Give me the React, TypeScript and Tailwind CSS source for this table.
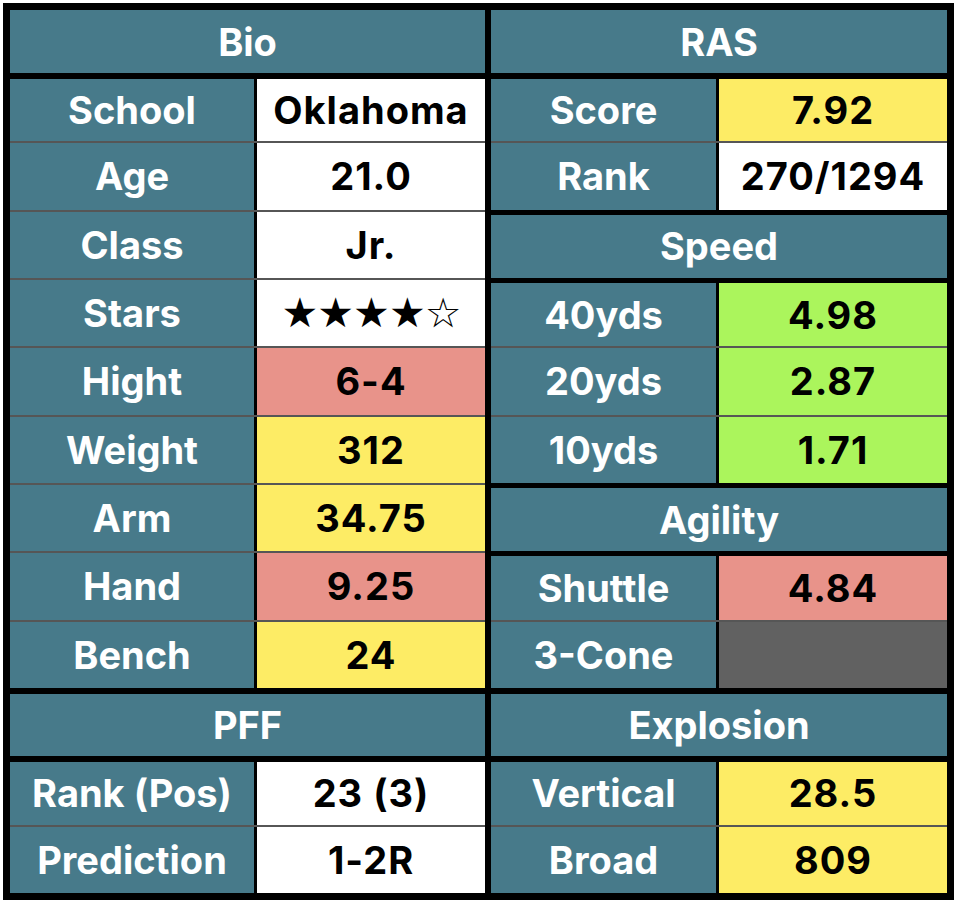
import React from "react";

type Line = "none" | "thin" | "thick" | "heavy";
type Item =
  | { kind: "head"; text: string; line: Line }
  | { kind: "row"; label: string; value: string; bg: string; line: Line };

const lineClass: Record<Line, string> = {
  none: "",
  thin: "border-t-2 border-[#565656]",
  thick: "border-t-[5px] border-black",
  heavy: "border-t-[6px] border-black",
};

const left: Item[] = [
  { kind: "head", text: "Bio", line: "none" },
  { kind: "row", label: "School", value: "Oklahoma", bg: "bg-white", line: "heavy" },
  { kind: "row", label: "Age", value: "21.0", bg: "bg-white", line: "thin" },
  { kind: "row", label: "Class", value: "Jr.", bg: "bg-white", line: "thin" },
  { kind: "row", label: "Stars", value: "★★★★☆", bg: "bg-white", line: "thin" },
  { kind: "row", label: "Hight", value: "6-4", bg: "bg-[#e8938a]", line: "thin" },
  { kind: "row", label: "Weight", value: "312", bg: "bg-[#fdec65]", line: "thin" },
  { kind: "row", label: "Arm", value: "34.75", bg: "bg-[#fdec65]", line: "thin" },
  { kind: "row", label: "Hand", value: "9.25", bg: "bg-[#e8938a]", line: "thin" },
  { kind: "row", label: "Bench", value: "24", bg: "bg-[#fdec65]", line: "thin" },
  { kind: "head", text: "PFF", line: "heavy" },
  { kind: "row", label: "Rank (Pos)", value: "23 (3)", bg: "bg-white", line: "heavy" },
  { kind: "row", label: "Prediction", value: "1-2R", bg: "bg-white", line: "thin" },
];

const right: Item[] = [
  { kind: "head", text: "RAS", line: "none" },
  { kind: "row", label: "Score", value: "7.92", bg: "bg-[#fdec65]", line: "heavy" },
  { kind: "row", label: "Rank", value: "270/1294", bg: "bg-white", line: "thin" },
  { kind: "head", text: "Speed", line: "thick" },
  { kind: "row", label: "40yds", value: "4.98", bg: "bg-[#abf55c]", line: "thick" },
  { kind: "row", label: "20yds", value: "2.87", bg: "bg-[#abf55c]", line: "thin" },
  { kind: "row", label: "10yds", value: "1.71", bg: "bg-[#abf55c]", line: "thin" },
  { kind: "head", text: "Agility", line: "thick" },
  { kind: "row", label: "Shuttle", value: "4.84", bg: "bg-[#e8938a]", line: "thick" },
  { kind: "row", label: "3-Cone", value: "", bg: "bg-[#616161]", line: "thin" },
  { kind: "head", text: "Explosion", line: "heavy" },
  { kind: "row", label: "Vertical", value: "28.5", bg: "bg-[#fdec65]", line: "heavy" },
  { kind: "row", label: "Broad", value: "809", bg: "bg-[#fdec65]", line: "thin" },
];

const Half = ({ items, labelWidth }: { items: Item[]; labelWidth: string }) => {
  return (
    <div className="flex flex-col">
      {items.map((it, i) => {
        const height = i === 0 ? "h-[63px]" : "h-[68.33px]";
        if (it.kind === "head") {
          return (
            <div
              key={i}
              className={`${height} ${lineClass[it.line]} flex items-center justify-center bg-[#477a8a] text-white`}
            >
              {it.text}
            </div>
          );
        }
        return (
          <div key={i} className={`${height} ${lineClass[it.line]} flex`}>
            <div
              className={`${labelWidth} flex items-center justify-center border-r-[3px] border-black bg-[#477a8a] text-white`}
            >
              {it.label}
            </div>
            <div
              className={`w-[228px] flex items-center justify-center ${it.bg} text-black tracking-[1px]`}
            >
              {it.label === "Stars" ? (
                <span className="font-['DejaVu_Sans',sans-serif] font-normal text-[41px] tracking-[-1px]">
                  {it.value}
                </span>
              ) : (
                it.value
              )}
            </div>
          </div>
        );
      })}
    </div>
  );
};

export default function App() {
  return (
    <div className="w-[960px] h-[906px] bg-white pl-[3px] pt-[3px]">
      <div className="w-[951px] border-[7px] border-black bg-black flex gap-[6px] font-['Inter','Liberation_Sans',sans-serif] font-bold text-[38px] leading-none">
        <div className="w-[475px]">
          <Half items={left} labelWidth="w-[247px]" />
        </div>
        <div className="w-[456px]">
          <Half items={right} labelWidth="w-[228px]" />
        </div>
      </div>
    </div>
  );
}
